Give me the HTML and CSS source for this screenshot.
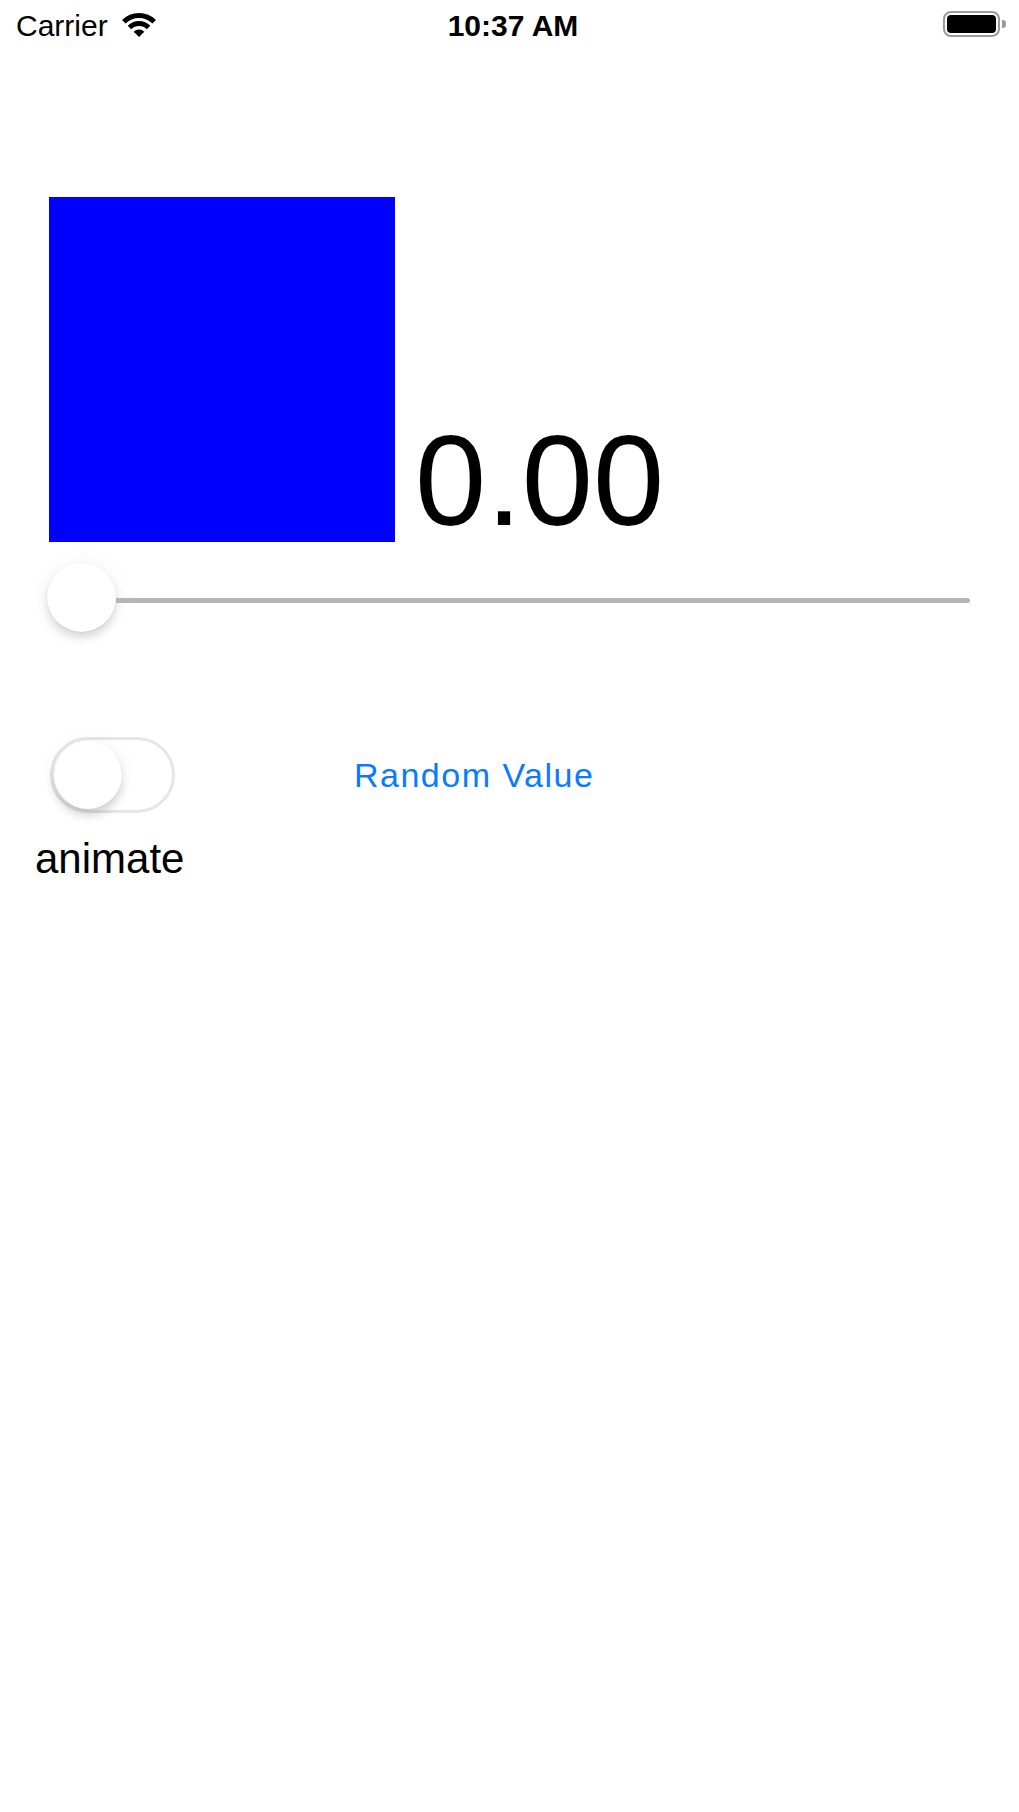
FILE: index.html
```html
<!DOCTYPE html>
<html>
<head>
<meta name="viewport" content="width=device-width, initial-scale=1.0">
<link rel="stylesheet" href="styles.css">
</head>
<body>
	<div class="status-bar">
		<div class="carrier">
			Carrier
			<svg class="wifi" width="34" height="24" viewBox="0 0 34 24">
				<path d="M1.8 8.8 A21.5 21.5 0 0 1 32.2 8.8" fill="none" stroke="#000" stroke-width="5"/>
				<path d="M7.45 14.45 A13.5 13.5 0 0 1 26.55 14.45" fill="none" stroke="#000" stroke-width="5"/>
				<path d="M17 24 L11.7 18.7 A7.5 7.5 0 0 1 22.3 18.7 Z" fill="#000"/>
			</svg>
		</div>
		<div class="clock">10:37 AM</div>
		<div class="battery-cntr">
			<div class="battery"><div class="level"></div></div>
			<div class="nub"></div>
		</div>
	</div>

	<div class="hero">
		<div class="square"></div>
		<div class="value">0.00</div>
	</div>

	<div class="slider">
		<div class="thumb"></div>
		<div class="track"></div>
	</div>

	<div class="controls">
		<div class="switch"><div class="knob"></div></div>
		<div class="random-btn">Random Value</div>
	</div>
	<div class="label">animate</div>
</body>
</html>
```

FILE: styles.css
```css
* {
	box-sizing: border-box;
}
body {
	margin: 0;
	background: #fff;
	color: #000;
	font-family: 'Liberation Sans', Arial, sans-serif;
}
.status-bar {
	display: grid;
	grid-template-columns: 1fr auto 1fr;
	align-items: start;
	height: 49px;
	padding: 11px 13px 0 16px;
	font-size: 30px;
	line-height: 30px;
}
.carrier {
	display: flex;
	align-items: flex-start;
}
.wifi {
	margin: 2px 0 0 14px;
}
.clock {
	font-weight: bold;
	padding-left: 4px;
}
.battery-cntr {
	display: flex;
	align-items: center;
	justify-content: flex-end;
}
.battery {
	width: 57px;
	height: 26px;
	border: 2px solid #9a9a9a;
	border-radius: 8px;
	padding: 2px;
}
.level {
	width: 100%;
	height: 100%;
	background: #000;
	border-radius: 4px;
}
.nub {
	width: 4px;
	height: 8px;
	background: #9a9a9a;
	border-radius: 0 3px 3px 0;
	margin-left: 2px;
}
.hero {
	display: flex;
	align-items: flex-end;
	margin: 148px 0 0 49px;
}
.square {
	width: 346px;
	height: 345px;
	background: #0000ff;
}
.value {
	font-size: 128px;
	line-height: 128px;
	margin: 0 0 -3px 20px;
}
.slider {
	display: flex;
	align-items: center;
	margin: 21px 49px 0 47px;
}
.thumb {
	width: 69px;
	height: 69px;
	border-radius: 50%;
	background: #fff;
	box-shadow: 0 0.5px 1px rgba(0,0,0,.12), 0 6px 9px rgba(0,0,0,.13), 0 0 22px rgba(0,0,0,.05);
	flex: none;
}
.track {
	flex: 1;
	height: 5px;
	margin-top: 5px;
	background: #b5b5b5;
	border-radius: 0 3px 3px 0;
}
.controls {
	display: flex;
	align-items: center;
	margin: 105px 0 0 50px;
}
.switch {
	width: 125px;
	height: 76px;
	border: 3px solid #e6e6e6;
	border-radius: 38px;
	padding: 1px 0 0 1px;
	flex: none;
}
.knob {
	width: 68px;
	height: 68px;
	border-radius: 50%;
	background: #fff;
	box-shadow: 0 0.5px 1px rgba(0,0,0,.12), 0 7px 8px rgba(0,0,0,.14), 0 0 20px rgba(0,0,0,.05);
}
.random-btn {
	margin-left: 179px;
	color: #0a7aff;
	font-size: 34px;
	letter-spacing: 1.5px;
	line-height: 40px;
}
.label {
	margin: 25px 0 0 35px;
	font-size: 42px;
	line-height: 41px;
}
```
